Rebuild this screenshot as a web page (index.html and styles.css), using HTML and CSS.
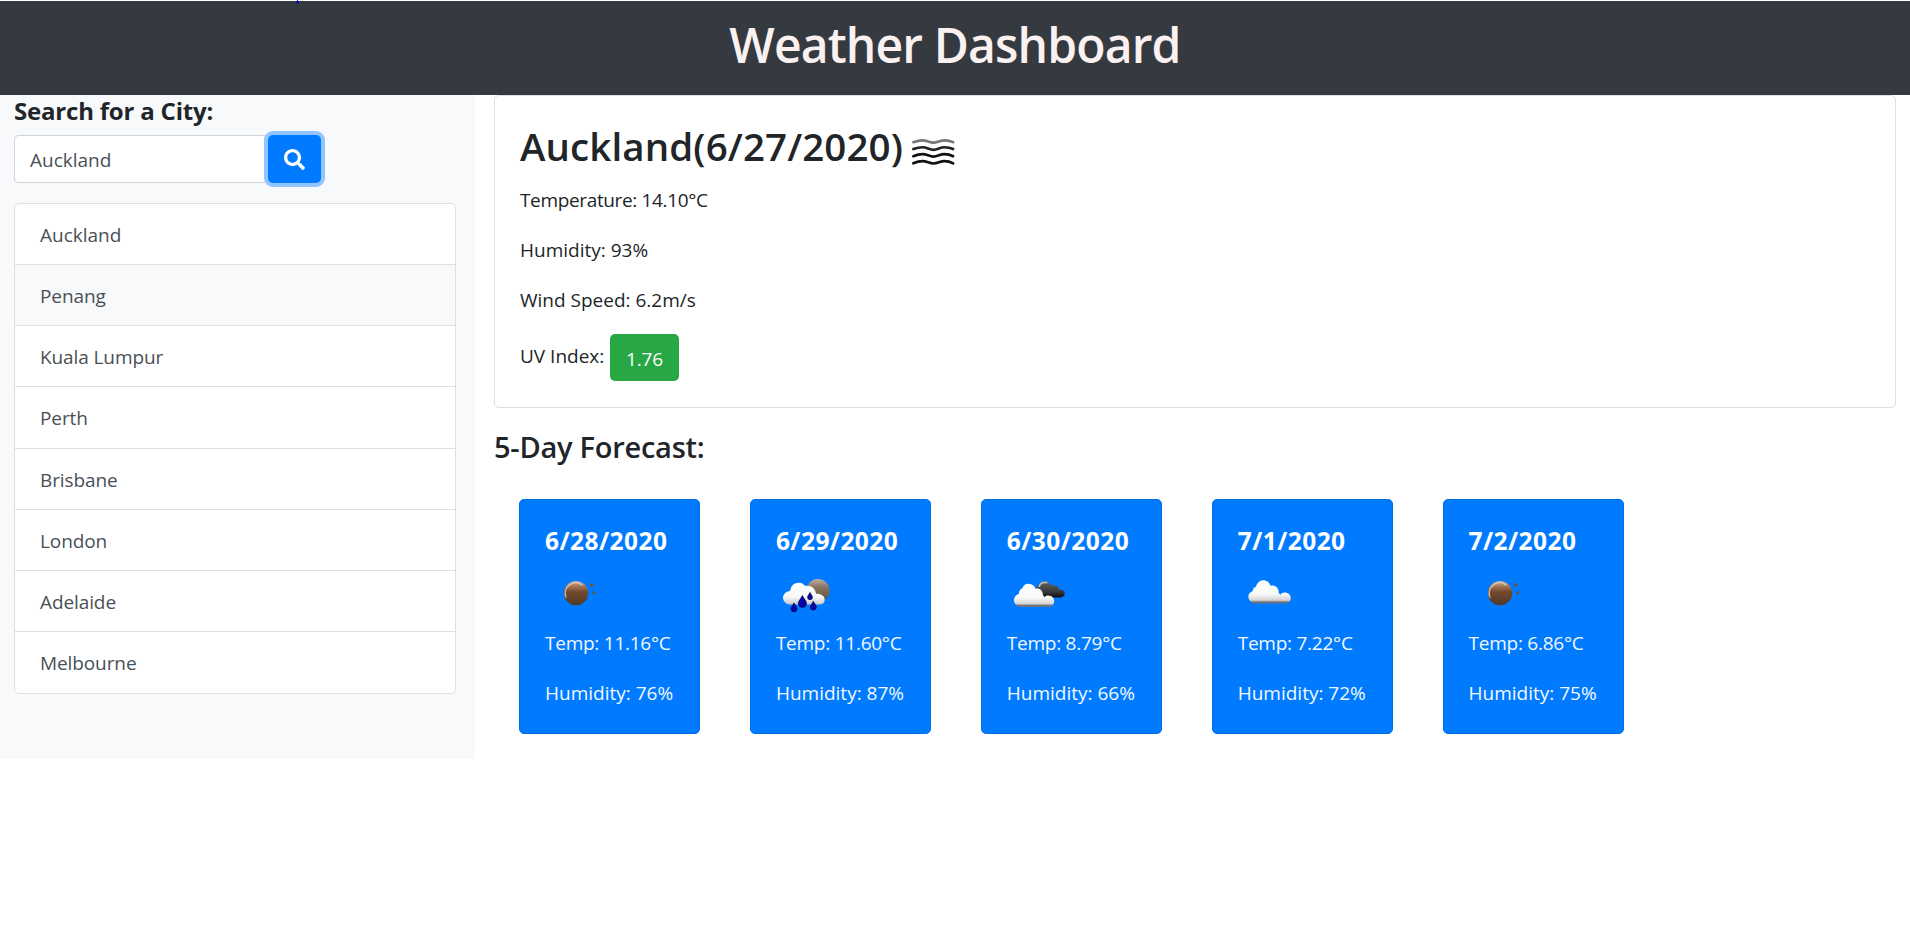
FILE: index.html
```
<!DOCTYPE html>
<html lang="en">
<head>
<meta charset="utf-8">
<title>Weather Dashboard</title>
<link rel="stylesheet" href="styles.css">
</head>
<body>
<svg class="defs" width="0" height="0" aria-hidden="true">
  <defs>
    <linearGradient id="moon" x1="0" y1="0" x2="0" y2="1"><stop offset="0" stop-color="#c9b5a5"/><stop offset=".2" stop-color="#a8795a"/><stop offset=".45" stop-color="#71492d"/><stop offset="1" stop-color="#503a29"/></linearGradient>
    <linearGradient id="cloud" x1="0" y1="0" x2="0" y2="1"><stop offset="0" stop-color="#fff"/><stop offset=".6" stop-color="#f8f8f8"/><stop offset=".86" stop-color="#d4d4d6"/><stop offset=".93" stop-color="#74777d"/><stop offset="1" stop-color="#68707c"/></linearGradient>
    <linearGradient id="rain-cloud" x1="0" y1="0" x2="0" y2="1"><stop offset="0" stop-color="#fff"/><stop offset=".65" stop-color="#f8f8f8"/><stop offset="1" stop-color="#c4c6ca"/></linearGradient>
    <linearGradient id="hazy-moon" x1="0" y1="0" x2="0" y2="1"><stop offset="0" stop-color="#bfb0a6"/><stop offset=".35" stop-color="#8a7462"/><stop offset="1" stop-color="#5f4a39"/></linearGradient>
    <linearGradient id="dark" x1="0" y1="0" x2="0" y2="1"><stop offset="0" stop-color="#666"/><stop offset=".6" stop-color="#3c3c3c"/><stop offset="1" stop-color="#111"/></linearGradient>
    <symbol id="clear-night" viewBox="545 562 62 62">
      <circle cx="576" cy="593.2" r="12.2" fill="url(#moon)"/>
      <path d="M565.8 597 A10.6 10.6 0 0 1 582 584.8" fill="none" stroke="#e2d2c8" stroke-width="1.6" stroke-linecap="round" opacity=".75"/>
      <path d="M589 584l1.8-.2.7-1.4.8 1.4 2 .2-1.5 1.3.5 1.9-1.8-.9-1.8.9.5-1.9zM591.4 592l1.5-.2.7-1.3.7 1.3 1.5.2-1.1 1.1.4 1.6-1.5-.8-1.5.8.4-1.6z" fill="#65564d"/>
    </symbol>
    <symbol id="rain-night" viewBox="776 562 62 62">
      <circle cx="818" cy="590.6" r="11.6" fill="url(#hazy-moon)"/>
      <path d="M789 604.5a6.7 6.7 0 0 1-.2-13.3c1.2 0 1.5-.6 1.7-1.7a8.3 8.3 0 0 1 14.8-3.400c5.500-1.200 10 2.200 10.700 7.600 4.500-.5 8.700 2.300 8.700 5.700 0 3.300-2 5.100-5 5.100z" fill="url(#rain-cloud)"/>
      <g fill="#0505a8" stroke="#07075e" stroke-width=".8"><path d="M802.400 595.600c1.500 3.300 4 5.500 4 7.800a4 4 0 0 1-8 0c0-2.300 2.500-4.500 4-7.800zM794 603c1 2.300 3 4 3 5.900a3 3 0 0 1-6 0c0-1.900 2-3.600 3-5.900zM813.300 601.200c1 2.300 3 4 3 5.900a3 3 0 0 1-6 0c0-1.900 2-3.600 3-5.900zM810 592.500c.8 1.800 2.400 3.300 2.400 4.800a2.400 2.400 0 0 1-4.800 0c0-1.500 1.600-3 2.400-4.800z"/></g>
    </symbol>
    <symbol id="broken-clouds" viewBox="1007 562 62 62">
      <path d="M1035 597.500V592c2-6 4.500-10.500 9.800-10.800 3.500-.2 5.500 3 8.200 4.300 3.500-1 5.500 1.500 6.500 4.500 3-.8 5.200 1.300 5.200 3.600s-1.700 3.900-4.200 3.900z" fill="url(#dark)"/>
      <path d="M1039 587c1-3.500 4-5.500 8.500-4.300" fill="none" stroke="#b9b9b9" stroke-width="1.700"/>
      <path d="M1020.500 607a6.700 6.700 0 0 1-1.500-13.200c-.2-4 2.300-5 3.300-5.600 1.300-3.300 4-4.800 7.200-4.300 3.300.2 5.300 2.200 6 4.800 4.200-.8 7.200 1.500 7.500 6.700 1.500.9 1.600 1.500 1.700 2 .5-1.300 1.700-1.900 3.500-1.900 3.700.2 6 2.600 6 5.500 0 3.300-2.400 6-5.700 6z" fill="url(#cloud)"/>
    </symbol>
    <symbol id="clouds" viewBox="1238 562 62 62">
      <path d="M1255.500 603.500a7 7 0 0 1-7.200-7c0-2.600 2-4.500 4.300-5.200.3-3 1.500-4 3.300-4.300 1-4 4-6.800 7.300-6.800 3.700 0 6.200 2.300 7.200 5.500 5-.7 8.300 2 8.500 7.500 1 .8 1.200 1 1.500 1.600.8-1.500 2.300-2.200 4.100-2.200 3.600 0 6.200 2.200 6.200 5.300 0 3.200-2.400 5.600-5.700 5.600z" fill="url(#cloud)"/>
    </symbol>
  </defs>
</svg>

<header class="header">
  <h1 class="header-title">Weather Dashboard</h1>
  <svg class="speck" width="3" height="4" viewBox="0 0 3 4"><path d="M1 0h1v1h1v2H2v1H1V3H0V1h1z" fill="#0000c8"/></svg>
</header>

<div class="layout">
  <aside class="sidebar">
    <h2 class="search-title">Search for a City:</h2>
    <form class="search">
      <input class="search-input" type="text" value="Auckland" aria-label="City">
      <button class="search-button" type="button" aria-label="Search"><svg width="21" height="21" viewBox="0 0 512 512"><path fill="#fff" d="M505 442.700L405.300 343c-4.500-4.500-10.600-7-17-7H372c27.600-35.300 44-79.700 44-128C416 93.100 322.900 0 208 0S0 93.100 0 208s93.100 208 208 208c48.300 0 92.700-16.400 128-44v16.300c0 6.400 2.500 12.500 7 17l99.700 99.700c9.400 9.400 24.600 9.400 33.900 0l28.300-28.300c9.400-9.400 9.400-24.600.1-34zM208 336c-70.700 0-128-57.200-128-128 0-70.700 57.200-128 128-128 70.700 0 128 57.200 128 128 0 70.700-57.200 128-128 128z"/></svg></button>
    </form>
    <ul class="history">
      <li class="history-item">Auckland</li>
      <li class="history-item history-item-hover">Penang</li>
      <li class="history-item">Kuala Lumpur</li>
      <li class="history-item">Perth</li>
      <li class="history-item">Brisbane</li>
      <li class="history-item">London</li>
      <li class="history-item">Adelaide</li>
      <li class="history-item">Melbourne</li>
    </ul>
  </aside>

  <main class="main">
    <section class="current">
      <h2 class="current-title"><span>Auckland(6/27/2020)</span>
        <svg class="mist" width="62" height="62" viewBox="902 121 62 62" fill="none" stroke-width="2.700" stroke-linecap="round">
          <path stroke="#777" d="M912.500 142q5-1.800 9.500-1.800c4 0 7 2.300 11 2.300s7-2.300 11-2.300q5 0 9 1.800"/>
          <path stroke="#222" d="M912.500 149q5-1.800 9.500-1.800c4 0 7 2.600 11 2.600s7-2.600 11-2.600q5 0 9 1.800"/>
          <path stroke="#111" d="M912.500 156.300q5-2.200 9.500-2.200c4 0 7 2.600 11 2.600s7-2.600 11-2.600q5 0 9 2.200"/>
          <path stroke="#111" d="M912.500 163.500q5-2.200 9.500-2.200c4 0 7 2.400 11 2.400s7-2.400 11-2.400q5 0 9 2.200"/>
        </svg>
      </h2>
      <p class="reading reading-temp">Temperature: 14.10°C</p>
      <p class="reading">Humidity: 93%</p>
      <p class="reading">Wind Speed: 6.2m/s</p>
      <p class="reading uv"><span class="uv-label">UV Index:</span><span class="uv-badge">1.76</span></p>
    </section>
    <h2 class="forecast-title">5-Day Forecast:</h2>
    <section class="forecast">
      <article class="day"><h3 class="day-date">6/28/2020</h3><svg class="day-icon"><use href="#clear-night"/></svg><p class="day-text day-temp">Temp: 11.16°C</p><p class="day-text">Humidity: 76%</p></article>
      <article class="day"><h3 class="day-date">6/29/2020</h3><svg class="day-icon"><use href="#rain-night"/></svg><p class="day-text day-temp">Temp: 11.60°C</p><p class="day-text">Humidity: 87%</p></article>
      <article class="day"><h3 class="day-date">6/30/2020</h3><svg class="day-icon"><use href="#broken-clouds"/></svg><p class="day-text day-temp">Temp: 8.79°C</p><p class="day-text">Humidity: 66%</p></article>
      <article class="day"><h3 class="day-date">7/1/2020</h3><svg class="day-icon"><use href="#clouds"/></svg><p class="day-text day-temp">Temp: 7.22°C</p><p class="day-text">Humidity: 72%</p></article>
      <article class="day"><h3 class="day-date">7/2/2020</h3><svg class="day-icon"><use href="#clear-night"/></svg><p class="day-text day-temp">Temp: 6.86°C</p><p class="day-text">Humidity: 75%</p></article>
    </section>
  </main>
</div>
</body>
</html>
```

FILE: styles.css
```
* { box-sizing: border-box; }
body { margin: 0; background: #fff; color: #212529; font: 400 19px/30px "Open Sans", "Noto Sans", sans-serif; letter-spacing: 0; }
h1, h2, h3, p, ul { margin: 0; padding: 0; }
svg { display: block; }
.defs { position: absolute; }

.header { position: relative; height: 95px; border-top: 1px solid #fff; background: #343a40; text-align: center; padding-top: 14px; }
.header-title { font-size: 48px; line-height: 60px; font-weight: 600; letter-spacing: -0.85px; color: #fbf1f0; }
.speck { position: absolute; left: 296px; top: -1px; }

.layout { display: flex; align-items: flex-start; }
.sidebar { width: 475px; height: 664px; padding: 1px 19px 0 14px; background: #f8f9fa; }
.search-title { font-size: 24px; line-height: 30px; font-weight: 700; letter-spacing: -0.2px; margin-bottom: 9px; }
.search { display: flex; height: 48px; margin-bottom: 20px; }
.search-input { width: 254px; height: 48px; margin: 0; padding: 2px 15px 0; border: 1px solid #ced4da; border-right: 0; border-radius: 5px 0 0 5px; background: #fff; color: #495057; font: inherit; letter-spacing: 0; }
.search-button { display: flex; align-items: center; justify-content: center; width: 53px; height: 48px; padding: 0; border: 0; border-radius: 5px; background: #007bff; box-shadow: 0 0 0 4px #90c5ff; }
.history { list-style: none; width: 442px; background: #fff; border: 1px solid #dfdfdf; border-radius: 5px; overflow: hidden; }
.history-item { height: 61.150px; padding: 16px 25px 0; color: #495057; letter-spacing: -0.1px; border-bottom: 1px solid #dfdfdf; }
.history-item:first-child { letter-spacing: 0; }
.history-item:last-child { border-bottom: 0; height: 61px; }
.history-item-hover { background: #f8f9fa; }

.main { flex: 1; padding: 0 14px 0 19px; }
.current { height: 313px; border: 1px solid #dfdfdf; border-radius: 5px; padding: 25px; }
.current-title { display: flex; width: 444px; height: 64px; font-size: 38.500px; line-height: 50px; font-weight: 600; letter-spacing: 0.1px; }
.mist { margin-left: auto; }
.reading { margin-bottom: 20px; }
.reading-temp { letter-spacing: -0.35px; }
.uv { display: flex; align-items: flex-start; margin: -1px 0 0; }
.uv-label { width: 90px; padding-top: 7px; }
.uv-badge { width: 69px; height: 47px; padding-top: 10px; border-radius: 5px; background: #28a745; color: #fff; text-align: center; letter-spacing: -0.2px; }
.forecast-title { margin-top: 21px; font-size: 29px; line-height: 36px; font-weight: 600; letter-spacing: -0.25px; }
.forecast { display: flex; gap: 49.900px; padding: 34px 25px 0; }
.day { width: 181px; height: 235px; padding: 25px 0 0 25px; border: 1px solid #016fe6; border-radius: 5px; background: #007bff; color: #fff; }
.day-date { font-size: 24.500px; line-height: 30px; font-weight: 700; letter-spacing: 0.45px; margin: 1px 0 6px; }
.day-icon { width: 62px; height: 62px; margin-bottom: 4px; }
.day-text { margin-bottom: 20px; color: #f2f8ff; }
.day-temp { letter-spacing: -0.25px; }
```
